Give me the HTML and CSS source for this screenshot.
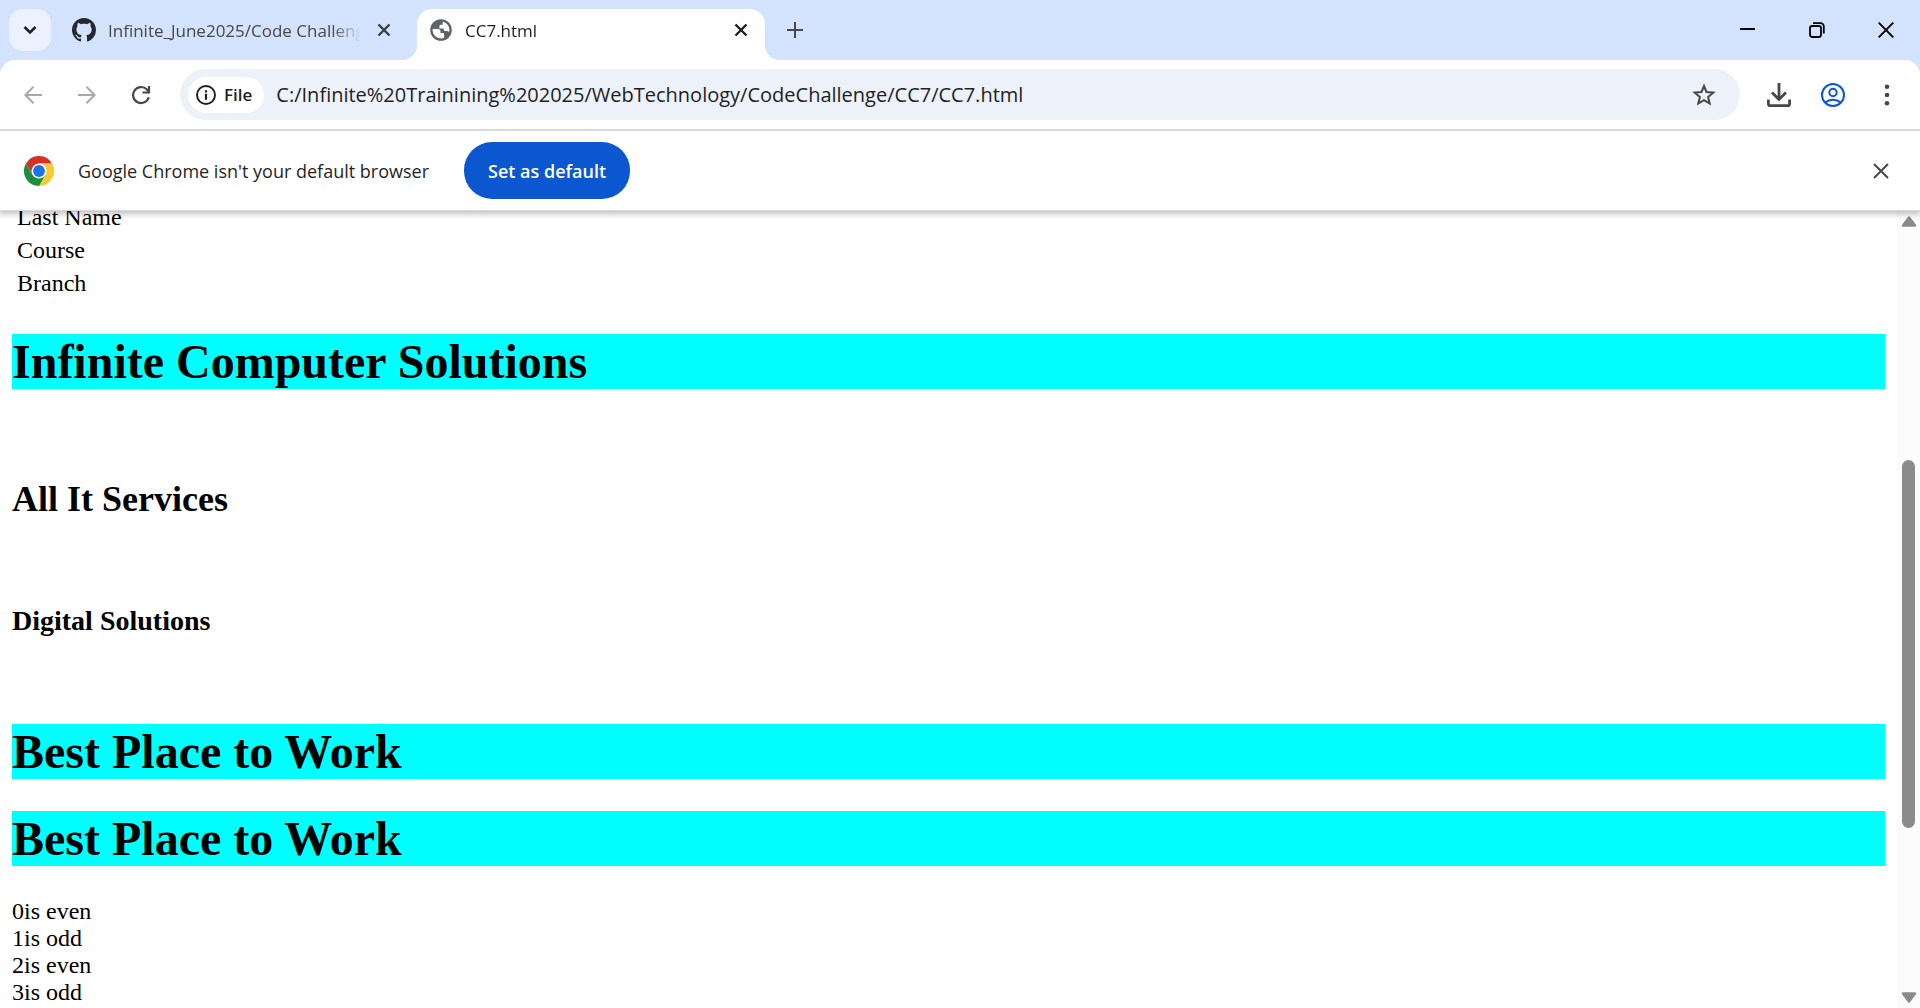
FILE: index.html
```html
<!DOCTYPE html>
<html lang="en">
<head>
<meta charset="utf-8">
<title>CC7.html</title>
<link rel="stylesheet" href="styles.css">
</head>
<body class="window">
<header class="chrome">
  <div class="tabstrip">
    <button class="tab-search" aria-label="Search tabs"><svg width="16" height="16" viewBox="0 0 16 16"><path d="M2.500 5l5.500 5.500L13.500 5" fill="none" stroke="#1f1f1f" stroke-width="2.600"/></svg></button>
    <div class="tab">
      <svg class="favicon" width="24" height="24" viewBox="0 0 16 16"><path fill="#24292f" d="M8 0C3.580 0 0 3.580 0 8c0 3.540 2.290 6.530 5.470 7.590.4.070.55-.17.55-.38 0-.19-.01-.82-.01-1.490-2.010.37-2.530-.49-2.690-.94-.09-.23-.48-.94-.82-1.130-.28-.15-.68-.52-.01-.53.63-.01 1.080.58 1.230.82.720 1.210 1.870.87 2.330.66.070-.52.28-.87.51-1.070-1.780-.2-3.640-.89-3.640-3.950 0-.87.31-1.590.82-2.150-.08-.2-.36-1.020.08-2.120 0 0 .67-.21 2.200.82.640-.18 1.320-.27 2-.27s1.360.09 2 .27c1.530-1.040 2.200-.82 2.200-.82.440 1.100.16 1.920.08 2.120.51.56.82 1.270.82 2.150 0 3.070-1.870 3.750-3.650 3.950.29.25.54.73.54 1.480 0 1.070-.01 1.930-.01 2.200 0 .21.15.46.55.38A8.010 8.010 0 0 0 16 8c0-4.420-3.580-8-8-8z"/></svg>
      <span class="tab-title">Infinite_June2025/Code Challenge</span>
      <button class="tab-close" aria-label="Close tab"><svg width="14" height="14" viewBox="0 0 14 14"><path d="M1.500 1.500l11 11M12.500 1.500l-11 11" stroke="#3c4043" stroke-width="2.400"/></svg></button>
    </div>
    <div class="tab tab-active">
      <svg class="favicon" width="24" height="24" viewBox="0 0 24 24"><path fill="#5f6368" fill-rule="evenodd" d="M12 1.200a10.800 10.800 0 1 0 0 21.600 10.800 10.800 0 0 0 0-21.600zM10.800 20.300C6.700 19.700 3.600 16.200 3.600 12c0-.4 0-.7.1-1.100H9c1.500 0 2.500 1 2.500 2.300V15h2.300c.8 0 1.300.6 1.300 1.300v3.400c-1.300.6-2.800.8-4.300.6zM20.200 13.900c-.6-.5-1.200-.8-2-.8h-1.800c-.9 0-1.500-.6-1.500-1.400s-.5-1.300-1.300-1.300h-3.200V8.300c0-.9.7-1.600 1.600-1.600h1.700V3.800c3.900.8 6.700 4.200 6.700 8.200 0 .7-.1 1.300-.2 1.900z"/></svg>
      <span class="tab-title">CC7.html</span>
      <button class="tab-close" aria-label="Close tab"><svg width="14" height="14" viewBox="0 0 14 14"><path d="M1.500 1.500l11 11M12.500 1.500l-11 11" stroke="#1f1f1f" stroke-width="2.400"/></svg></button>
    </div>
    <button class="new-tab" aria-label="New tab"><svg width="16" height="16" viewBox="0 0 16 16"><path d="M8 0v16M0 8h16" stroke="#474747" stroke-width="2"/></svg></button>
    <div class="window-controls">
      <button aria-label="Minimize"><svg width="16" height="16" viewBox="0 0 16 16"><path d="M0 7h15" stroke="#000" stroke-width="2"/></svg></button>
      <button aria-label="Restore"><svg width="16" height="16" viewBox="0 0 16 16" fill="none" stroke="#000" stroke-width="1.800"><rect x="1" y="4" width="11" height="11" rx="2.200"/><path d="M4 1.200h7.500a3.300 3.300 0 0 1 3.300 3.300V11.500"/></svg></button>
      <button aria-label="Close"><svg width="16" height="16" viewBox="0 0 16 16"><path d="M.7.700l14.600 14.600M15.300.700L.7 15.300" stroke="#000" stroke-width="1.900"/></svg></button>
    </div>
  </div>

  <div class="toolbar">
    <button class="nav-button" aria-label="Back"><svg width="18" height="18" viewBox="0 0 18 18" fill="none" stroke="#a8a8a8" stroke-width="2"><path d="M18 9H1.500M9.500.800L1.300 9l8.200 8.200"/></svg></button>
    <button class="nav-button" aria-label="Forward"><svg width="18" height="18" viewBox="0 0 18 18" fill="none" stroke="#a8a8a8" stroke-width="2"><path d="M0 9h16.500M8.500.800L16.700 9l-8.200 8.200"/></svg></button>
    <button class="nav-button" aria-label="Reload"><svg width="20" height="20" viewBox="0 0 20 20" fill="none" stroke="#474747" stroke-width="2.200"><path d="M17.800 12.200a8 8 0 1 1-1.900-7.700l2 2.100M18 1v6.500h-6.500"/></svg></button>
    <div class="omnibox">
      <button class="site-chip"><svg width="20" height="20" viewBox="0 0 20 20"><circle cx="10" cy="10" r="9" fill="none" stroke="#1f1f1f" stroke-width="1.900"/><path d="M10 8.800v6M10 5.200v2.200" stroke="#1f1f1f" stroke-width="2.200"/></svg>File</button>
      <input class="url" type="text" aria-label="Address" value="C:/Infinite%20Trainining%202025/WebTechnology/CodeChallenge/CC7/CC7.html">
      <button class="bookmark" aria-label="Bookmark this tab"><svg width="24" height="24" viewBox="0 0 24 24"><path d="M12 3l2.500 6 6.800.6-5.200 4.400 1.600 6.500-5.700-3.400-5.700 3.400 1.600-6.500-5.200-4.400 6.800-.6z" fill="none" stroke="#474747" stroke-width="2"/></svg></button>
    </div>
    <div class="toolbar-actions">
      <button aria-label="Downloads"><svg width="24" height="24" viewBox="0 0 24 24" fill="none" stroke="#474747" stroke-width="2.800"><path d="M12 0v15.500M5 9.500l7 7 7-7M1.400 16.500v4.600a1.500 1.500 0 0 0 1.500 1.500h18.200a1.500 1.500 0 0 0 1.500-1.500v-4.600"/></svg></button>
      <button aria-label="Profile"><svg width="24" height="24" viewBox="0 0 24 24" fill="none" stroke="#0b57d0" stroke-width="2"><circle cx="12" cy="12" r="11"/><circle cx="12" cy="9.500" r="3.700"/><path d="M4.200 19.600c4.500-3.700 11.100-3.700 15.600 0"/></svg></button>
      <button aria-label="Menu"><svg width="24" height="24" viewBox="0 0 24 24" fill="#474747"><circle cx="12" cy="3.800" r="2.300"/><circle cx="12" cy="12" r="2.300"/><circle cx="12" cy="20.200" r="2.300"/></svg></button>
    </div>
  </div>

  <div class="infobar">
    <svg class="chrome-logo" width="30" height="30" viewBox="0 0 48 48"><path fill="#d93025" d="M3.200 12a24 24 0 0 1 41.600 0H24L13.600 30z"/><path fill="#fcc934" d="M44.800 12A24 24 0 0 1 24 48l10.400-18L24 12z"/><path fill="#1e8e3e" d="M24 48A24 24 0 0 1 3.200 12l10.400 18 20.800 0z"/><circle cx="24" cy="24" r="12" fill="#fff"/><circle cx="24" cy="24" r="9.500" fill="#1a73e8"/></svg>
    <span class="infobar-text">Google Chrome isn't your default browser</span>
    <button class="set-default">Set as default</button>
    <button class="infobar-close" aria-label="Dismiss"><svg width="16" height="16" viewBox="0 0 16 16"><path d="M1 1l14 14M15 1L1 15" stroke="#474747" stroke-width="2"/></svg></button>
  </div>
</header>

<div class="viewport">
  <main class="page">
    <table class="fields">
      <tr><td>Last Name</td></tr>
      <tr><td>Course</td></tr>
      <tr><td>Branch</td></tr>
    </table>
    <h1>Infinite Computer Solutions</h1>
    <br>
    <h2>All It Services</h2>
    <br>
    <h3>Digital Solutions</h3>
    <br>
    <h1>Best Place to Work</h1>
    <h1>Best Place to Work</h1>
    0is even<br>
    1is odd<br>
    2is even<br>
    3is odd<br>
  </main>
  <div class="scrollbar">
    <svg width="16" height="12" viewBox="0 0 16 12"><path d="M8 2.500L14 10.500H2z" fill="#8b8b8b" stroke="#8b8b8b" stroke-width="2.500" stroke-linejoin="round"/></svg>
    <div class="track"><div class="thumb"></div></div>
    <svg width="16" height="12" viewBox="0 0 16 12"><path d="M8 9.500L14 1.500H2z" fill="#8b8b8b" stroke="#8b8b8b" stroke-width="2.500" stroke-linejoin="round"/></svg>
  </div>
</div>
</body>
</html>
```
FILE: styles.css
```css
* { box-sizing: border-box; }

.window {
  margin: 0;
  height: 100vh;
  display: flex;
  flex-direction: column;
  overflow: hidden;
  background: #fff;
  color: #1f1f1f;
  font-family: "Open Sans", "Noto Sans", sans-serif;
}

button {
  display: flex;
  align-items: center;
  justify-content: center;
  padding: 0;
  border: 0;
  background: none;
  color: inherit;
  font: inherit;
}

svg { display: block; flex: none; }

/* Browser frame */
.chrome {
  flex: none;
  position: relative;
  z-index: 1;
  background: #d3e3fd;
  border-bottom: 1px solid #dadada;
  box-shadow: 0 2px 6px 1px rgba(0, 0, 0, 0.25);
}

/* Tab strip */
.tabstrip {
  display: flex;
  height: 60px;
  padding: 9px 0 0 9px;
}

.tab-search {
  width: 42px;
  height: 42px;
  border-radius: 14px;
  background: #ebf1fe;
}

.tab {
  display: flex;
  align-items: center;
  width: 348px;
  height: 51px;
  padding: 0 17px 9px 12px;
  margin-left: 9px;
  color: #474747;
  font-size: 17px;
}

.tab-active {
  position: relative;
  border-radius: 15px 15px 0 0;
  background: #fff;
  color: #1f1f1f;
}

/* Outward curves at the foot of the selected tab */
.tab-active::before,
.tab-active::after {
  content: "";
  position: absolute;
  bottom: 0;
  width: 15px;
  height: 15px;
}

.tab-active::before {
  right: 100%;
  background: radial-gradient(circle at 0 0, transparent 15px, #fff 15px);
}

.tab-active::after {
  left: 100%;
  background: radial-gradient(circle at 100% 0, transparent 15px, #fff 15px);
}

.tab-title {
  flex: 1;
  margin: 2px 17px 0 12px;
  overflow: hidden;
  white-space: nowrap;
  line-height: 24px;
  -webkit-mask-image: linear-gradient(to left, transparent, #000 28px);
  mask-image: linear-gradient(to left, transparent, #000 28px);
}

.new-tab { width: 42px; height: 42px; margin-left: 9px; }

.window-controls { display: flex; margin-left: auto; }

.window-controls button { width: 69px; height: 42px; }

/* Toolbar */
.toolbar {
  display: flex;
  align-items: center;
  height: 71px;
  padding: 0 12px;
  border-bottom: 2px solid #d9d9d9;
  border-radius: 15px 15px 0 0;
  background: #fff;
}

.nav-button { width: 42px; height: 42px; margin-right: 12px; }

.omnibox {
  flex: 1;
  display: flex;
  align-items: center;
  height: 51px;
  margin-left: 6px;
  padding: 0 24px 0 8px;
  border-radius: 26px;
  background: #ecf1fa;
}

.site-chip {
  gap: 8px;
  height: 36px;
  padding: 0 12px 0 8px;
  border-radius: 18px;
  background: #fff;
  font-size: 17px;
  font-weight: 600;
}

.url {
  flex: 1;
  min-width: 0;
  margin-left: 12px;
  padding: 0;
  border: 0;
  outline: 0;
  background: none;
  color: #1f1f1f;
  font: 20px/28px "Open Sans", "Noto Sans", sans-serif;
}

.toolbar-actions { display: flex; gap: 12px; margin-left: 18px; }

.toolbar-actions button { width: 42px; height: 42px; }

/* Default-browser notice */
.infobar {
  display: flex;
  align-items: center;
  height: 79px;
  padding: 0 24px;
  background: #fff;
  font-size: 18px;
}

.infobar-text { min-width: 362px; margin: 0 24px; }

.set-default {
  height: 57px;
  padding: 0 24px;
  border-radius: 28px;
  background: #0b57d0;
  color: #fff;
  font-weight: 600;
}

.infobar-close { width: 30px; height: 42px; margin-left: auto; }

/* Document area */
.viewport {
  flex: 1;
  min-height: 0;
  display: flex;
  overflow: hidden;
}

/* Scrolled so that the table's first row sits under the notice */
.page {
  flex: 1;
  margin-top: -11px;
  padding: 0 12px;
  color: #000;
  font: 24px/27px "Liberation Serif", "Times New Roman", serif;
}

.fields { border-spacing: 3px; line-height: 28px; }

.fields td { padding: 0 2px 2px; }

h1 {
  margin: 32px 0;
  background: #00ffff;
  font-size: 48px;
  line-height: 55px;
}

h2 { margin: 30px 0; font-size: 36px; line-height: 42px; }

h3 { margin: 28px 0; font-size: 28px; line-height: 32px; }

.scrollbar {
  display: flex;
  flex-direction: column;
  align-items: center;
  width: 23px;
  padding: 4px 0;
  background: #fcfcfc;
}

.track {
  flex: 1;
  display: grid;
  grid-template-rows: 233fr 368fr 164fr;
}

.thumb {
  grid-row: 2;
  width: 13px;
  border-radius: 7px;
  background: #8b8b8b;
}
```
